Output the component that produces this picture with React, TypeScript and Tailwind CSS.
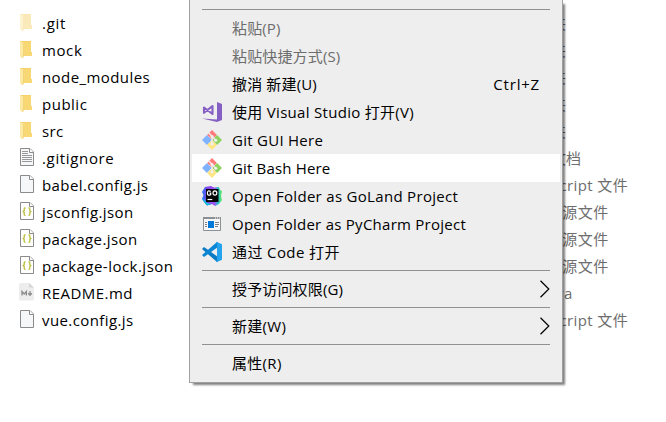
import type { ReactNode } from 'react';

type FileKind = 'hidden' | 'folder' | 'text' | 'blank' | 'json' | 'markdown';

interface FileEntry {
  name: string;
  kind: FileKind;
  type: string;
  nameClass: string;
  typeClass: string;
}

const files: FileEntry[] = [
  { name: '.git', kind: 'hidden', type: '文件夹', nameClass: 'tracking-[0.7px]', typeClass: '' },
  { name: 'mock', kind: 'folder', type: '文件夹', nameClass: 'tracking-[0.6px]', typeClass: '' },
  { name: 'node_modules', kind: 'folder', type: '文件夹', nameClass: 'tracking-[0.42px]', typeClass: '' },
  { name: 'public', kind: 'folder', type: '文件夹', nameClass: 'tracking-[0.5px]', typeClass: '' },
  { name: 'src', kind: 'folder', type: '文件夹', nameClass: 'tracking-[0.4px]', typeClass: '' },
  { name: '.gitignore', kind: 'text', type: '文本文档', nameClass: 'tracking-[0.65px]', typeClass: '' },
  { name: 'babel.config.js', kind: 'blank', type: 'JavaScript 文件', nameClass: 'tracking-[0.42px]', typeClass: 'tracking-[0.4px]' },
  { name: 'jsconfig.json', kind: 'json', type: 'JSON 源文件', nameClass: 'tracking-[0.4px]', typeClass: 'tracking-[0.45px]' },
  { name: 'package.json', kind: 'json', type: 'JSON 源文件', nameClass: 'tracking-[0.42px]', typeClass: 'tracking-[0.45px]' },
  { name: 'package-lock.json', kind: 'json', type: 'JSON 源文件', nameClass: 'tracking-[0.48px]', typeClass: 'tracking-[0.45px]' },
  { name: 'README.md', kind: 'markdown', type: 'Typora', nameClass: 'tracking-[0.45px]', typeClass: 'tracking-[0.6px]' },
  { name: 'vue.config.js', kind: 'blank', type: 'JavaScript 文件', nameClass: 'tracking-[0.4px]', typeClass: 'tracking-[0.4px]' },
];

function FolderIcon({ faded }: { faded: boolean }) {
  return (
    <svg width="16" height="20" viewBox="0 0 16 20" className={faded ? 'opacity-50' : ''}>
      <path d="M1 2h11v11l1 .5V17H4z" fill="#f6d06b" />
      <path d="M4 3h8v10l1 .5V17H4z" fill="#f8d775" />
      <path d="M1 2l4 2v11l-1 1v3.500l-3-2z" fill="#fde9a4" />
      <path d="M4.500 4v11L4 19" stroke="#efc65c" strokeWidth=".6" fill="none" />
    </svg>
  );
}

function PageIcon({ kind }: { kind: FileKind }) {
  return (
    <svg width="16" height="20" viewBox="0 0 16 20">
      <path d="M1.500 1.500h9.500l3.500 3.500v13.500h-13z" fill={kind === 'json' ? '#fff' : '#f5f7f8'} stroke="#8b8b8b" />
      <path d="M10.500 1.500v4h4" fill="#fff" stroke="#8b8b8b" />
      {kind === 'text' && (
        <path d="M3 4.500h6M3 6.500h6M3 8.500h10M3 10.500h10M3 12.500h10M3 14.500h10" stroke="#999" />
      )}
      {kind === 'json' && (
        <path
          d="M6.500 7H6Q5.200 7 5.200 7.800V9.800L4.200 10.600L5.200 11.400V13.500Q5.200 14.300 6 14.300H6.500M9.500 7H10Q10.800 7 10.800 7.800V9.800L11.800 10.600L10.800 11.400V13.500Q10.800 14.300 10 14.300H9.500"
          stroke="#b9bf3c"
          strokeWidth="1.300"
          fill="none"
        />
      )}
    </svg>
  );
}

function MarkdownIcon() {
  return (
    <svg width="16" height="20" viewBox="0 0 16 20">
      <path d="M2 1h8l5 4.500V17q0 1.500-1.500 1.500H1.500Q0 18.500 0 17V2.500Q0 1 2 1z" fill="#ededed" />
      <path d="M10 1l5 4.500h-5z" fill="#d5d5d5" />
      <path d="M3 13.500v-4l2.200 2.500 2.200-2.500v4M11 9v3.500M9.200 11.300l1.800 1.900 1.800-1.900" fill="none" stroke="#8b8b8b" strokeWidth="1.300" />
    </svg>
  );
}

function FileIcon({ kind }: { kind: FileKind }) {
  if (kind === 'hidden' || kind === 'folder') return <FolderIcon faded={kind === 'hidden'} />;
  if (kind === 'markdown') return <MarkdownIcon />;
  return <PageIcon kind={kind} />;
}

function VisualStudioIcon() {
  return (
    <svg width="20" height="20" viewBox="0 0 20 20">
      <path d="M15 0l5 2v16l-5 2L0 16.500l15 1z" fill="#865fc5" />
      <path d="M2 5.500L10.500 12V4L2 10.800z" fill="none" stroke="#865fc5" strokeWidth="2.100" strokeLinejoin="round" />
    </svg>
  );
}

function GitIcon() {
  return (
    <svg width="20" height="20" viewBox="0 0 20 20">
      <path d="M10 0l4.900 4.900-4.900 4.900-4.900-4.900z" fill="#ff7b7b" />
      <path d="M4.900 5.100L9.800 10l-4.900 4.900L0 10z" fill="#80b3ff" />
      <path d="M15.100 5.100L20 10l-4.900 4.900L10.200 10z" fill="#8dd35f" />
      <path d="M10 10.200l4.900 4.900L10 20l-4.900-4.900z" fill="#ffe680" />
      <path d="M6.500 2.800L10 6.300v8M10 6.500l3.500 3.500" stroke="#f0eded" strokeWidth="1.400" fill="none" />
      <circle cx="10" cy="6.500" r="1.600" fill="#f0eded" />
      <circle cx="10" cy="14" r="1.600" fill="#f0eded" />
      <circle cx="13.700" cy="10.300" r="1.600" fill="#f0eded" />
    </svg>
  );
}

function GoLandIcon() {
  return (
    <svg width="20" height="20" viewBox="0 0 20 20">
      <defs>
        <linearGradient id="goland" x1="0" y1="0" x2="1" y2="0">
          <stop offset="0" stopColor="#2375f5" />
          <stop offset=".25" stopColor="#7d45ee" />
          <stop offset=".6" stopColor="#a44af3" />
          <stop offset=".8" stopColor="#20c3d0" />
          <stop offset="1" stopColor="#6bea54" />
        </linearGradient>
      </defs>
      <path d="M3 1l6-1 3 1.500L17 1l1 3 2 1-1 5 1 4-3 4-4 2-3-2-5 1.500L2 16l-2-3 1.500-4L0 6z" fill="url(#goland)" />
      <path d="M1 12l4 5 5 1-5 1.500L2 16z" fill="#0bc5d6" />
      <path d="M4 3h12.500v13H4z" fill="#050505" />
      <path d="M8.700 5.500Q5.500 3.800 5.400 7T8.700 8.700V7.200H7.600" fill="none" stroke="#fff" strokeWidth="1.200" />
      <ellipse cx="12.900" cy="7" rx="1.900" ry="2.100" fill="none" stroke="#fff" strokeWidth="1.200" />
      <path d="M5.500 13.500h4.800" stroke="#fff" strokeWidth="1.200" />
    </svg>
  );
}

function WindowIcon() {
  return (
    <svg width="20" height="20" viewBox="0 0 20 20">
      <path d="M1.500 3.500h17v13h-17z" fill="#f7f7f7" stroke="#8b9095" />
      <path d="M1 3h18v2H1z" fill="#8b9095" />
      <path d="M13 4h1M15 4h1M17 4h1" stroke="#fff" />
      <path d="M6 7h6v7H6z" fill="#0078d7" />
      <path d="M3 8.500h2M3 10.500h2M3 12.500h2M13 8.500h4M13 10.500h4M13 12.500h3" stroke="#7a7f85" />
    </svg>
  );
}

function CodeIcon() {
  return (
    <svg width="20" height="20" viewBox="0 0 20 20">
      <path d="M0 7l2-2L16 15v5h-1z" fill="#0a7bc4" />
      <path d="M0 13l2 2L16 5V0h-1z" fill="#0a86d4" />
      <path d="M15 0l5 2.300v15.400L15 20l-1-.7 1-1V1.700l-1-1z" fill="#24a4ee" />
    </svg>
  );
}

function Separator() {
  return <div className="mx-[10px] h-px bg-[#919191]" />;
}

interface ItemProps {
  label: string;
  icon?: ReactNode;
  shortcut?: string;
  disabled?: boolean;
  active?: boolean;
  submenu?: boolean;
  labelClass?: string;
}

function MenuItem({ label, icon, shortcut, disabled, active, submenu, labelClass = '' }: ItemProps) {
  return (
    <div className={`flex h-7 items-center whitespace-nowrap pl-[10px] ${active ? 'bg-white' : ''} ${disabled ? 'text-[#6d6d6d]' : 'text-black'}`}>
      <div className="h-5 w-5">{icon}</div>
      <span className={`ml-[10px] ${labelClass}`}>{label}</span>
      {shortcut && <span className="ml-auto mr-[20px] tracking-[0.8px]">{shortcut}</span>}
      {submenu && (
        <svg width="10" height="18" viewBox="0 0 10 18" className="ml-auto mr-[10px]">
          <path d="M.5 .8L8.800 9 .5 17.200" fill="none" stroke="#000" strokeWidth="1.200" />
        </svg>
      )}
    </div>
  );
}

function ContextMenu() {
  return (
    <div className="absolute left-[189px] top-0 h-[383px] w-[374px] border border-t-0 border-[#a0a0a0] bg-[#eee] px-[2px] pt-[9px] shadow-[3px_3px_2px_-1px_rgba(0,0,0,0.5)]">
      <Separator />
      <div className="mt-1">
        <MenuItem label="粘贴(P)" labelClass="tracking-[0.15px]" disabled />
        <MenuItem label="粘贴快捷方式(S)" labelClass="tracking-[0.15px]" disabled />
        <MenuItem label="撤消 新建(U)" labelClass="tracking-[0.15px]" shortcut="Ctrl+Z" />
        <MenuItem label="使用 Visual Studio 打开(V)" labelClass="tracking-[0.3px]" icon={<VisualStudioIcon />} />
        <MenuItem label="Git GUI Here" labelClass="tracking-[0.27px]" icon={<GitIcon />} />
        <MenuItem label="Git Bash Here" labelClass="tracking-[0.17px]" icon={<GitIcon />} active />
        <MenuItem label="Open Folder as GoLand Project" labelClass="tracking-[0.31px]" icon={<GoLandIcon />} />
        <MenuItem label="Open Folder as PyCharm Project" labelClass="tracking-[0.26px]" icon={<WindowIcon />} />
        <MenuItem label="通过 Code 打开" labelClass="tracking-[0.4px]" icon={<CodeIcon />} />
      </div>
      <div className="flex flex-col gap-1 pt-1">
        <Separator />
        <MenuItem label="授予访问权限(G)" labelClass="tracking-[0.15px]" submenu />
        <Separator />
        <MenuItem label="新建(W)" labelClass="tracking-[0.3px]" submenu />
        <Separator />
        <MenuItem label="属性(R)" labelClass="tracking-[0.3px]" />
      </div>
    </div>
  );
}

export default function App() {
  return (
    <div className="relative h-[422px] w-[666px] overflow-hidden bg-white pt-[10px] font-['Open_Sans','Noto_Sans_CJK_SC',sans-serif] text-[15px] leading-[27px] text-black">
      {files.map((file) => (
        <div key={file.name} className="flex h-[27px] items-center whitespace-nowrap">
          <div className="ml-[19px] w-[23px] self-start pt-0.5">
            <FileIcon kind={file.kind} />
          </div>
          <span className={`w-[479px] ${file.nameClass}`}>{file.name}</span>
          <span className={`text-[#6d6d6d] ${file.typeClass}`}>{file.type}</span>
        </div>
      ))}
      <ContextMenu />
    </div>
  );
}
